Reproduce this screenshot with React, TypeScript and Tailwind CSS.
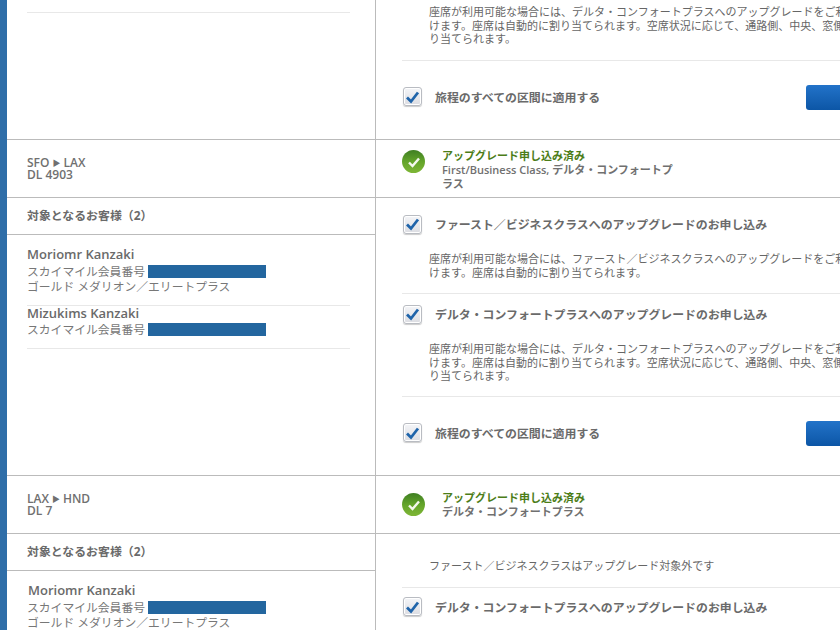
import React from "react";

function Check() {
  return (
    <span className="mb-[2px] flex h-[19px] w-[19px] shrink-0 items-center justify-center rounded-[3px] border border-[#b9bcc2] bg-gradient-to-b from-[#f4f5f8] to-[#dcdde2] shadow-[inset_0_0_0_1px_#ffffff,0_1px_1px_#cccccc]">
      <svg width="15" height="14" viewBox="0 0 15 14">
        <path d="M2 7.5 L6 11.5 L13 2.5" fill="none" stroke="#1f64aa" strokeWidth="2.8" />
      </svg>
    </span>
  );
}

function Done() {
  return (
    <span className="flex h-[23px] w-[23px] shrink-0 items-center justify-center rounded-full bg-gradient-to-b from-[#3f7f22] via-[#63a42a] to-[#7eb636]">
      <svg width="14" height="12" viewBox="0 0 14 12">
        <path d="M2 6.5 L5.5 10 L12 2.5" fill="none" stroke="#f4f8ee" strokeWidth="2.4" />
      </svg>
    </span>
  );
}

function Para({ lines }: { lines: string[] }) {
  return (
    <p className="ml-[26px] whitespace-nowrap text-[11px] leading-[13.5px] text-[#666666]">
      {lines.map((l) => (
        <span key={l} className="block">
          {l}
        </span>
      ))}
    </p>
  );
}

function OptionRow({ label }: { label: string }) {
  return (
    <div className="flex h-[20px] items-center gap-[13px] pl-px">
      <Check />
      <span className="whitespace-nowrap text-[11.9px] font-bold text-[#6a6a6a]">{label}</span>
    </div>
  );
}

function Option({ label, lines, pad }: { label: string; lines: string[]; pad: string }) {
  return (
    <div className={`border-b border-[#e8e8e8] ${pad}`}>
      <OptionRow label={label} />
      <div className="mt-[17px] pl-px">
        <Para lines={lines} />
      </div>
    </div>
  );
}

function ApplyAll() {
  return (
    <div className="flex h-[25px] items-center pl-px">
      <Check />
      <span className="ml-[13px] w-[371px] shrink-0 whitespace-nowrap text-[11.9px] font-bold text-[#6a6a6a]">
        旅程のすべての区間に適用する
      </span>
      <span className="h-[25px] w-[80px] shrink-0 rounded-[3px] bg-gradient-to-b from-[#2273c9] to-[#0c56a6]" />
    </div>
  );
}

function Flight({
  route,
  dest,
  num,
  pad,
  children,
}: {
  route: string;
  dest: string;
  num: string;
  pad: string;
  children: React.ReactNode;
}) {
  return (
    <div className="flex h-[58px] border-b border-[#bbbbbb]">
      <div className="w-[369px] shrink-0 border-r border-[#bbbbbb] pl-[20px] pt-[17px] text-[12px] font-semibold leading-[12px] text-[#707070]">
        <div className="flex items-center gap-[3px]">
          <span>{route}</span>
          <span className="text-[8px] leading-[12px]">▶</span>
          <span>{dest}</span>
        </div>
        <div>{num}</div>
      </div>
      <div className={`flex flex-1 items-start gap-[17px] pl-[26px] ${pad}`}>{children}</div>
    </div>
  );
}

function Member({
  name,
  gold,
  box,
  nameBox,
}: {
  name: string;
  gold?: boolean;
  box: string;
  nameBox: string;
}) {
  return (
    <div className={`border-b border-[#e8e8e8] ${box}`}>
      <div className={`text-[13px] font-semibold text-[#6a6a6a] ${nameBox}`}>{name}</div>
      <div className="flex h-[16px] items-center text-[11.8px] leading-[16px] text-[#777777]">
        スカイマイル会員番号
        <span className="ml-[3px] h-[13px] w-[118px] bg-[#23669f]" />
      </div>
      {gold && <div className="text-[11.8px] leading-[15px] text-[#777777]">ゴールド メダリオン／エリートプラス</div>}
    </div>
  );
}

const comfort = [
  "座席が利用可能な場合には、デルタ・コンフォートプラスへのアップグレードをご利用いただ",
  "けます。座席は自動的に割り当てられます。空席状況に応じて、通路側、中央、窓側の席が割",
  "り当てられます。",
];
const first = [
  "座席が利用可能な場合には、ファースト／ビジネスクラスへのアップグレードをご利用いただ",
  "けます。座席は自動的に割り当てられます。",
];

export default function App() {
  return (
    <div className="flex h-[630px] w-[840px] overflow-hidden bg-white font-['Open_Sans','Noto_Sans_CJK_JP',sans-serif]">
      <div className="w-[7px] shrink-0 bg-[#2f6ea8]" />
      <div className="w-[833px]">
        {/* first, cut-off segment */}
        <div className="flex h-[140px] border-b border-[#bbbbbb]">
          <div className="w-[369px] shrink-0 border-r border-[#bbbbbb] pl-[20px] pr-[25px] pt-[12px]">
            <div className="border-b border-[#e8e8e8]" />
          </div>
          <div className="min-w-0 flex-1 pl-[26px] pt-[5px]">
            <div className="border-b border-[#e8e8e8] pb-[14.5px] pl-px">
              <Para lines={comfort} />
            </div>
            <div className="pt-[24px]">
              <ApplyAll />
            </div>
          </div>
        </div>

        <Flight route="SFO" dest="LAX" num="DL 4903" pad="pt-[10px]">
          <Done />
          <div className="mt-[-1px] w-[232px] text-[11px] leading-[14px]">
            <div className="font-bold text-[#4c7d18]">アップグレード申し込み済み</div>
            <div className="font-semibold text-[#707070]">First/Business Class, デルタ・コンフォートプラス</div>
          </div>
        </Flight>

        {/* second segment */}
        <div className="flex h-[278px] border-b border-[#bbbbbb]">
          <div className="w-[369px] shrink-0 border-r border-[#bbbbbb]">
            <div className="flex h-[37px] items-center border-b border-[#bbbbbb] pl-[20px] text-[11.9px] font-bold text-[#6a6a6a]">
              対象となるお客様（2）
            </div>
            <div className="ml-[20px] mr-[25px]">
              <Member name="Moriomr Kanzaki" gold box="mt-[11px] pb-[11px]" nameBox="leading-[17px]" />
              <Member name="Mizukims Kanzaki" box="pb-[11px]" nameBox="leading-[15px]" />
            </div>
          </div>
          <div className="min-w-0 flex-1 pl-[26px] pt-[17px]">
            <Option label="ファースト／ビジネスクラスへのアップグレードのお申し込み" lines={first} pad="pb-[14px]" />
            <div className="pt-[11px]">
              <Option label="デルタ・コンフォートプラスへのアップグレードのお申し込み" lines={comfort} pad="pb-[13.5px]" />
            </div>
            <div className="pt-[24px]">
              <ApplyAll />
            </div>
          </div>
        </div>

        <Flight route="LAX" dest="HND" num="DL 7" pad="pt-[17px]">
          <Done />
          <div className="mt-[-2px] w-[232px] text-[11px] leading-[14px]">
            <div className="font-bold text-[#4c7d18]">アップグレード申し込み済み</div>
            <div className="font-semibold text-[#707070]">デルタ・コンフォートプラス</div>
          </div>
        </Flight>

        {/* third segment */}
        <div className="flex h-[120px]">
          <div className="w-[369px] shrink-0 border-r border-[#bbbbbb]">
            <div className="flex h-[37px] items-center border-b border-[#bbbbbb] pl-[20px] text-[11.9px] font-bold text-[#6a6a6a]">
              対象となるお客様（2）
            </div>
            <div className="ml-[20px] mr-[25px]">
              <Member name="Moriomr Kanzaki" gold box="mt-[11px] pb-[11px]" nameBox="pl-px leading-[17px]" />
            </div>
          </div>
          <div className="min-w-0 flex-1 pl-[26px]">
            <div className="border-b border-[#e8e8e8] pb-[14px] pl-px pt-[25px]">
              <Para lines={["ファースト／ビジネスクラスはアップグレード対象外です"]} />
            </div>
            <div className="pt-[10px]">
              <OptionRow label="デルタ・コンフォートプラスへのアップグレードのお申し込み" />
            </div>
          </div>
        </div>
      </div>
    </div>
  );
}
